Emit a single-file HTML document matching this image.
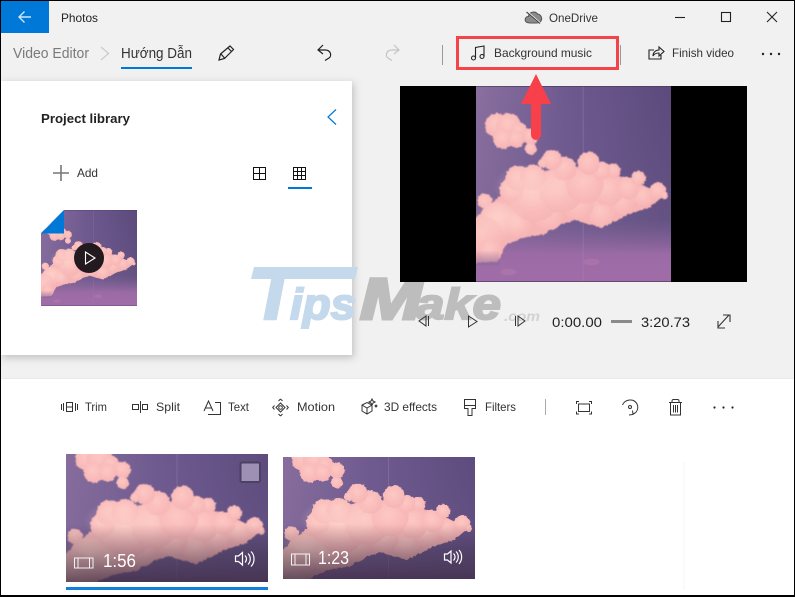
<!DOCTYPE html>
<html><head><meta charset="utf-8"><style>
html,body{margin:0;padding:0;background:#fff;width:795px;height:597px;overflow:hidden}
svg{display:block}
text{font-family:"Liberation Sans","Noto Sans CJK JP",sans-serif;fill:#222}
</style></head><body>
<svg width="795" height="597" viewBox="0 0 795 597" xmlns="http://www.w3.org/2000/svg">
<defs>
<linearGradient id="sky" x1="0" y1="0" x2="1" y2="0"><stop offset="0" stop-color="#8a6f9f"/><stop offset=".45" stop-color="#6f5a90"/><stop offset="1" stop-color="#5c4a7c"/></linearGradient>
<linearGradient id="sky2" x1="0" y1="0" x2="0" y2="1"><stop offset="0" stop-color="#6c5a8c" stop-opacity="0"/><stop offset=".68" stop-color="#74608f" stop-opacity=".35"/><stop offset=".86" stop-color="#9c6ba6"/><stop offset="1" stop-color="#a06ca8"/></linearGradient>
<linearGradient id="fade" x1="0" y1="0" x2="0" y2="1"><stop offset="0" stop-color="#8d6a9c" stop-opacity="0"/><stop offset="1" stop-color="#8d6a9c"/></linearGradient>
<radialGradient id="puff" cx=".45" cy=".4" r=".7"><stop offset="0" stop-color="#fdc8c3"/><stop offset="1" stop-color="#f6b2b3"/></radialGradient>
<radialGradient id="hl" cx=".5" cy=".5" r=".5"><stop offset="0" stop-color="#ffd6cd" stop-opacity=".55"/><stop offset="1" stop-color="#ffd6cd" stop-opacity="0"/></radialGradient>
<linearGradient id="shade" x1="0" y1="0" x2="0" y2="1"><stop offset="0" stop-color="#2d2238" stop-opacity="0"/><stop offset=".55" stop-color="#2d2238" stop-opacity="0"/><stop offset="1" stop-color="#2d2238" stop-opacity=".72"/></linearGradient>
<filter id="fz" x="-5%" y="-5%" width="110%" height="110%"><feTurbulence type="fractalNoise" baseFrequency=".12" numOctaves="2" seed="7"/><feDisplacementMap in="SourceGraphic" scale="9" xChannelSelector="R" yChannelSelector="G"/><feGaussianBlur stdDeviation="1.2"/></filter>
<filter id="sh" x="-10%" y="-10%" width="120%" height="120%"><feGaussianBlur stdDeviation="4"/></filter>
<symbol id="cloud" viewBox="228 18 585 587" preserveAspectRatio="none" overflow="hidden">
<rect x="228" y="18" width="585" height="587" fill="url(#sky)"/>
<rect x="228" y="18" width="585" height="587" fill="url(#sky2)"/>
<rect x="548" y="18" width="3" height="587" fill="#a98bb0" opacity=".35"/>
<g filter="url(#fz)" transform="translate(4 4)">
<path d="M210 420L300 340L420 270L560 250L700 300L790 340L745 378L680 398L640 420L600 438L560 428L520 415L490 425L450 440L430 458L370 468L330 482L312 492L290 540L210 545Z" fill="#f6b4b4"/>
<g fill="url(#puff)">
<circle cx="287" cy="132" r="36"/><circle cx="322" cy="134" r="38"/><circle cx="352" cy="150" r="26"/><circle cx="388" cy="165" r="24"/><circle cx="305" cy="172" r="30"/><circle cx="345" cy="172" r="26"/><circle cx="388" cy="202" r="18"/>
<circle cx="250" cy="358" r="22"/>
<circle cx="290" cy="420" r="58"/><circle cx="245" cy="465" r="60"/><circle cx="265" cy="505" r="34"/><circle cx="350" cy="430" r="40"/><circle cx="440" cy="400" r="46"/>
<circle cx="600" cy="395" r="40"/><circle cx="530" cy="370" r="46"/><circle cx="660" cy="360" r="40"/><circle cx="725" cy="345" r="30"/><circle cx="770" cy="328" r="25"/><circle cx="790" cy="342" r="10"/>
<circle cx="620" cy="325" r="48"/><circle cx="680" cy="320" r="34"/><circle cx="712" cy="290" r="22"/>
<circle cx="400" cy="345" r="75"/><circle cx="480" cy="325" r="68"/><circle cx="550" cy="310" r="56"/><circle cx="330" cy="325" r="36"/>
<circle cx="350" cy="290" r="38"/><circle cx="395" cy="288" r="38"/>
<circle cx="636" cy="268" r="22"/><circle cx="600" cy="268" r="28"/><circle cx="562" cy="245" r="34"/>
<circle cx="490" cy="262" r="36"/><circle cx="452" cy="235" r="30"/><circle cx="425" cy="245" r="14"/>
</g>
</g>
<ellipse cx="400" cy="320" rx="120" ry="70" fill="url(#hl)"/>
<ellipse cx="300" cy="410" rx="80" ry="60" fill="url(#hl)"/>
<rect x="228" y="510" width="70" height="45" fill="url(#fade)" opacity=".7"/>
<ellipse cx="325" cy="575" rx="24" ry="10" fill="#b77fae" opacity=".45"/>
<ellipse cx="575" cy="545" rx="24" ry="10" fill="#b77fae" opacity=".45"/>
<rect x="228" y="18" width="585" height="2" fill="#4a3a5e"/>
<rect x="228" y="603" width="585" height="2" fill="#4a3a5e"/>
</symbol>
<clipPath id="c1"><rect x="66" y="454" width="202" height="128"/></clipPath>
<clipPath id="c2"><rect x="283" y="457" width="192" height="122"/></clipPath>
</defs>

<rect width="795" height="597" fill="#fff"/>
<rect x="0" y="0" width="795" height="379" fill="#f1f1f1"/>
<rect x="0" y="378" width="795" height="1" fill="#e9e9e9"/>
<rect x="683" y="462" width="1.5" height="128" fill="#f9f9f9"/>

<!-- panel -->
<rect x="2" y="83" width="352" height="275" fill="#888" opacity=".45" filter="url(#sh)"/>
<rect x="1" y="81" width="351" height="274" fill="#fff"/>

<!-- watermark -->
<g font-weight="bold" font-style="italic">
<path d="M254 267H358L355 279H251Z" fill="#c5d9ec"/>
<text x="252" y="319" font-size="72" style="fill:#c5d9ec;stroke:#c5d9ec;stroke-width:3" textLength="44" lengthAdjust="spacingAndGlyphs">T</text>
<text x="290" y="319" font-size="44" style="fill:#c5d9ec;stroke:#c5d9ec;stroke-width:2" textLength="66" lengthAdjust="spacingAndGlyphs">ips</text>
<text x="360" y="319" font-size="58" style="fill:#bdbdbd;stroke:#bdbdbd;stroke-width:3" textLength="62" lengthAdjust="spacingAndGlyphs">M</text>
<text x="416" y="319" font-size="44" style="fill:#bdbdbd;stroke:#bdbdbd;stroke-width:2" textLength="85" lengthAdjust="spacingAndGlyphs">ake</text>
<text x="504" y="321" font-size="14" style="fill:#d2d2d2" textLength="36" lengthAdjust="spacingAndGlyphs">.com</text>
</g>

<!-- title bar -->
<rect x="1" y="1" width="48" height="32" fill="#0078d7"/>
<path d="M19.5 17H31M24.5 11.5L19 17L24.5 22.5" fill="none" stroke="#cfe4f7" stroke-width="1.4"/>
<text x="61" y="22" font-size="12" textLength="37" lengthAdjust="spacingAndGlyphs">Photos</text>
<g fill="none" stroke="#333" stroke-width="1.1">
<path d="M527 22.5C524 21 525 16.5 528.5 16.5C529 12 535 10.5 537.5 14C541 14.5 542.5 18 541 21C540 22.8 538 23 536 23H530Z" fill="#8b8b8b" stroke="#555"/>
<path d="M526 11L541 24" stroke="#f1f1f1" stroke-width="2"/>
<path d="M526.5 12L540 23.5" stroke="#333"/>
</g>
<text x="549" y="22" font-size="12" textLength="49" lengthAdjust="spacingAndGlyphs" style="fill:#333">OneDrive</text>
<path d="M675 17.5H685" stroke="#222" stroke-width="1.1"/>
<rect x="721.5" y="12.5" width="9" height="9" fill="none" stroke="#222" stroke-width="1.1"/>
<path d="M767 12L777 22M777 12L767 22" stroke="#222" stroke-width="1.1"/>

<!-- nav -->
<text x="13" y="58" font-size="14.5" textLength="76" lengthAdjust="spacingAndGlyphs" style="fill:#7a7a7a">Video Editor</text>
<path d="M101 47L108.5 53.5L101 60" fill="none" stroke="#c4c4c4" stroke-width="1.1"/>
<text x="121" y="58" font-size="14.5" textLength="71" lengthAdjust="spacingAndGlyphs" style="fill:#333">Hướng Dẫn</text>
<rect x="121" y="67" width="71" height="2" fill="#0078d7"/>
<path d="M219 60L220.5 54L230 46L233.5 49.5L224.5 58.5ZM221 54L224.5 58M228 48L231.5 51.5" fill="none" stroke="#222" stroke-width="1.2"/>
<path d="M323 45L318 50L323 54M318 50H325C331 50 332 56 329 58L325 60.5" fill="none" stroke="#222" stroke-width="1.2"/>
<path d="M394 45L399 50L394 54M399 50H392C386 50 385 56 388 58L392 60.5" fill="none" stroke="#c4c4c4" stroke-width="1.2"/>
<rect x="442" y="45" width="1" height="20" fill="#999"/>
<rect x="620" y="45" width="1" height="20" fill="#999"/>
<g fill="none" stroke="#222" stroke-width="1.1">
<path d="M475.5 58V47.5L484 46V56"/><circle cx="473.5" cy="58" r="2"/><circle cx="482" cy="56.5" r="2"/>
</g>
<text x="494" y="57" font-size="12" textLength="98" lengthAdjust="spacingAndGlyphs" style="fill:#333">Background music</text>
<rect x="457.5" y="37.5" width="160" height="31" fill="none" stroke="#f4444a" stroke-width="3"/>
<g fill="none" stroke="#222" stroke-width="1.1">
<path d="M654 50H649V59H661V55"/><path d="M653 56C653 52 656 50 659 50V47L664 51.5L659 56V53C656 53 654 54 653 56Z"/>
</g>
<text x="672" y="57" font-size="12" textLength="62" lengthAdjust="spacingAndGlyphs" style="fill:#333">Finish video</text>
<g fill="#222"><circle cx="763" cy="54" r="1.2"/><circle cx="771" cy="54" r="1.2"/><circle cx="779" cy="54" r="1.2"/></g>

<!-- preview -->
<rect x="400" y="86" width="347" height="196" fill="#000"/>
<use href="#cloud" x="476" y="86" width="195" height="196"/>
<path d="M536 74L551 104H541V135A5 5 0 0 1 531 135V104H521Z" fill="#f8404a"/>

<g fill="none" stroke="#333" stroke-width="1">
<path d="M426 316L419 321L426 326ZM428.5 316V326"/>
<path d="M468.5 316V327L477 321.5Z"/>
<path d="M515.5 316V326M518 316L525 321L518 326Z"/>
<path d="M718 327L729 315M723 315H730V322M718 321V328H725" stroke-width="1.1"/>
</g>
<text x="552" y="327" font-size="14" textLength="50" lengthAdjust="spacingAndGlyphs">0:00.00</text>
<rect x="611" y="320" width="21" height="3" fill="#8a8a8a"/>
<text x="641" y="327" font-size="14" textLength="49" lengthAdjust="spacingAndGlyphs">3:20.73</text>

<!-- panel content -->
<text x="41" y="123" font-size="13" font-weight="bold" textLength="89" lengthAdjust="spacingAndGlyphs" style="fill:#222">Project library</text>
<path d="M336 109.5L328 117L336 124.5" fill="none" stroke="#0078d7" stroke-width="1.2"/>
<path d="M61 165V181M53 173H69" stroke="#777" stroke-width="1.6"/>
<text x="77" y="177" font-size="12" textLength="21" lengthAdjust="spacingAndGlyphs" style="fill:#333">Add</text>
<g fill="none" stroke="#111" stroke-width="1">
<path d="M253.5 167.5H265.5V179.5H253.5ZM259.5 167.5V179.5M253.5 173.5H265.5"/>
<path d="M293.5 167.5H305.5V179.5H293.5ZM297.5 167.5V179.5M301.5 167.5V179.5M293.5 171.5H305.5M293.5 175.5H305.5"/>
</g>
<rect x="288" y="187" width="24" height="2" fill="#0078d7"/>
<use href="#cloud" x="41" y="210" width="96" height="96"/>
<path d="M41 210H64L41 233Z" fill="#fff"/>
<path d="M41 233.5L64 210V233.5Z" fill="#0078d7"/>
<circle cx="89" cy="258" r="15" fill="#231a1f"/>
<path d="M85.5 252V264L95 258Z" fill="none" stroke="#fff" stroke-width="1.1"/>

<!-- toolbar -->
<g fill="none" stroke="#333" stroke-width="1">
<path d="M61.5 404V410M63.5 403V411M66.5 402.5H72.5V411.5H66.5ZM66.5 407H72.5M75.5 403V411M77.5 404V410"/>
<path d="M132.5 404.5H138.5V409.5H132.5ZM140.5 401V413M142.5 404.5H147.5V409.5H142.5Z"/>
<path d="M204 411L208.5 401L213 411M205.5 408H211.5M215 402.5H220.5V414.5H208"/>
<path d="M280.5 403L285 407.5L280.5 412L276 407.5ZM280.5 399L278.5 401M280.5 399L282.5 401M280.5 416L278.5 414M280.5 416L282.5 414M274.5 405.5L272.7 407.5L274.5 409.5M286.5 405.5L288.3 407.5L286.5 409.5"/>
<circle cx="280.5" cy="407.5" r="1.8"/>
<path d="M362 405L367 402.5L372 405V411L367 414L362 411ZM362 405L367 408L372 405M367 408V414"/>
<path d="M372 399L373 401L375 402L373 403L372 405L371 403L369 402L371 401ZM376 405L377 406L376 407L375 406Z"/>
<path d="M464.5 399.5H475.5V408.5H472V415.5H468V408.5H464.5ZM464.5 405.5H475.5"/>
<path d="M578.5 404H589.5V411.5H578.5ZM576.5 404V401.5H579M589 401.5H591.5V404M576.5 411.5V414H579M589 414H591.5V411.5"/>
<path d="M622.5 405C625 399 634 398 637 404C639 408 637 413 633 414M629 415L633 414.5L632.5 410.5"/>
<circle cx="630" cy="407" r="1.5"/>
<path d="M669 402.5H682M672 402.5V401A1.5 1.5 0 0 1 673.5 399.5H677.5A1.5 1.5 0 0 1 679 401V402.5M670.5 402.5V415H680.5V402.5M673.5 405V412.5M675.5 405V412.5M677.5 405V412.5"/>
</g>
<g font-size="12">
<text x="85" y="411" font-size="12" textLength="22" lengthAdjust="spacingAndGlyphs" style="fill:#333">Trim</text>
<text x="156" y="411" font-size="12" textLength="24" lengthAdjust="spacingAndGlyphs" style="fill:#333">Split</text>
<text x="228" y="411" font-size="12" textLength="21" lengthAdjust="spacingAndGlyphs" style="fill:#333">Text</text>
<text x="297" y="411" font-size="12" textLength="38" lengthAdjust="spacingAndGlyphs" style="fill:#333">Motion</text>
<text x="384" y="411" font-size="12" textLength="53" lengthAdjust="spacingAndGlyphs" style="fill:#333">3D effects</text>
<text x="485" y="411" font-size="12" textLength="31" lengthAdjust="spacingAndGlyphs" style="fill:#333">Filters</text>
</g>
<rect x="545" y="399" width="1" height="16" fill="#aaa"/>
<g fill="#222"><circle cx="714.5" cy="407.5" r="1.1"/><circle cx="723.5" cy="407.5" r="1.1"/><circle cx="732.5" cy="407.5" r="1.1"/></g>

<!-- clips -->
<g clip-path="url(#c1)"><use href="#cloud" x="66" y="418" width="202" height="202"/></g>
<rect x="66" y="454" width="202" height="128" fill="url(#shade)"/>
<rect x="240.5" y="462.5" width="19.5" height="19.5" rx="1.5" fill="#9d90b4" stroke="#4b4160" stroke-width="2"/>
<rect x="66" y="587" width="202" height="3" fill="#0f80dc"/>
<g clip-path="url(#c2)"><use href="#cloud" x="283" y="421" width="192" height="192"/></g>
<rect x="283" y="457" width="192" height="122" fill="url(#shade)"/>

<g fill="none" stroke="#fff" stroke-width="1">
<path d="M74.5 558H93V568H74.5ZM78 558V568M89.5 558V568" stroke-opacity=".9"/>
<path d="M235.5 556V561.5H238.5L242.5 565V552.5L238.5 556ZM245 555.5C247 557.5 247 560.5 245 562.5M248 553.5C251 556.5 251 561.5 248 564.5M251 551.5C255 555.5 255 562.5 251 566.5" stroke-width="1.2"/>
<path d="M291.5 554H309.5V565H291.5ZM295 554V565M306 554V565" stroke-opacity=".9"/>
<path d="M444.5 554V560H447.5L451 563V551L447.5 554ZM453.5 553.5C455.5 555.5 455.5 558.5 453.5 560.5M456 551.5C459 554.5 459 559.5 456 562.5M459 550C462.5 554 462.5 560 459 564" stroke-width="1.2"/>
</g>
<text x="103" y="567" font-size="18" textLength="33" lengthAdjust="spacingAndGlyphs" style="fill:#fff">1:56</text>
<text x="318" y="564" font-size="18" textLength="31" lengthAdjust="spacingAndGlyphs" style="fill:#fff">1:23</text>

<!-- window border -->
<rect x="0" y="0" width="795" height="1" fill="#000"/>
<rect x="0" y="0" width="1" height="597" fill="#000"/>
<rect x="794" y="0" width="1" height="597" fill="#000"/>
<rect x="0" y="595" width="795" height="2" fill="#000"/>
</svg>
</body></html>
